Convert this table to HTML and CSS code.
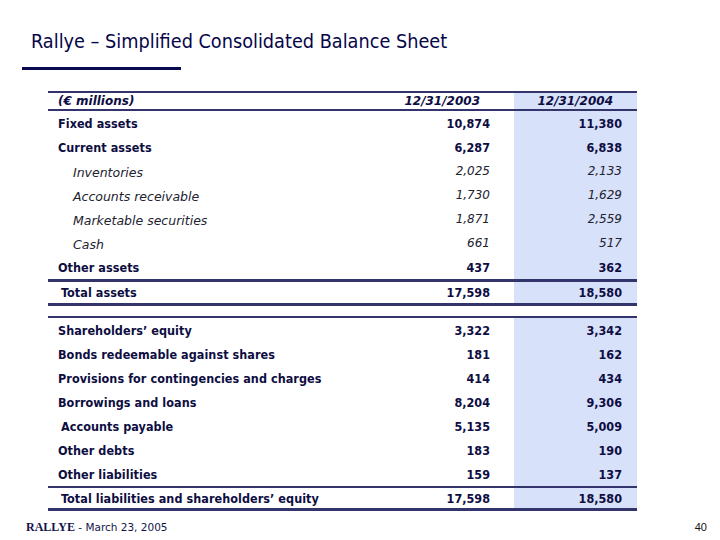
FILE: index.html
```html
<!DOCTYPE html>
<html lang="en">
<head>
<meta charset="utf-8">
<title>Rallye – Simplified Consolidated Balance Sheet</title>
<link rel="stylesheet" href="styles.css">
</head>
<body>
<div class="slide">
  <h1 class="title">Rallye – Simplified Consolidated Balance Sheet</h1>
  <div class="rule"></div>

  <div class="sheet">
    <div class="block">
      <div class="row head">
        <span class="label">(€ millions)</span>
        <span class="v1">12/31/2003</span>
        <span class="v2">12/31/2004</span>
      </div>
      <div class="row main"><span class="label">Fixed assets</span><span class="v1">10,874</span><span class="v2">11,380</span></div>
      <div class="row main"><span class="label">Current assets</span><span class="v1">6,287</span><span class="v2">6,838</span></div>
      <div class="row sub"><span class="label">Inventories</span><span class="v1">2,025</span><span class="v2">2,133</span></div>
      <div class="row sub"><span class="label">Accounts receivable</span><span class="v1">1,730</span><span class="v2">1,629</span></div>
      <div class="row sub"><span class="label">Marketable securities</span><span class="v1">1,871</span><span class="v2">2,559</span></div>
      <div class="row sub"><span class="label">Cash</span><span class="v1">661</span><span class="v2">517</span></div>
      <div class="row main"><span class="label">Other assets</span><span class="v1">437</span><span class="v2">362</span></div>
      <div class="row main total"><span class="label shifted">Total assets</span><span class="v1">17,598</span><span class="v2">18,580</span></div>
    </div>

    <div class="block block-liab">
      <div class="row main"><span class="label">Shareholders’ equity</span><span class="v1">3,322</span><span class="v2">3,342</span></div>
      <div class="row main"><span class="label">Bonds redeemable against shares</span><span class="v1">181</span><span class="v2">162</span></div>
      <div class="row main"><span class="label">Provisions for contingencies and charges</span><span class="v1">414</span><span class="v2">434</span></div>
      <div class="row main"><span class="label">Borrowings and loans</span><span class="v1">8,204</span><span class="v2">9,306</span></div>
      <div class="row main"><span class="label shifted">Accounts payable</span><span class="v1">5,135</span><span class="v2">5,009</span></div>
      <div class="row main"><span class="label">Other debts</span><span class="v1">183</span><span class="v2">190</span></div>
      <div class="row main"><span class="label">Other liabilities</span><span class="v1">159</span><span class="v2">137</span></div>
      <div class="row main total total-liab"><span class="label shifted">Total liabilities and shareholders’ equity</span><span class="v1">17,598</span><span class="v2">18,580</span></div>
    </div>
  </div>

  <footer class="footer">
    <span class="source"><b class="brand">RALLYE</b> - March 23, 2005</span>
    <span class="page">40</span>
  </footer>
</div>
</body>
</html>
```

FILE: styles.css
```css
html, body {
  margin: 0;
  padding: 0;
  background: #ffffff;
}

.slide {
  width: 720px;
  height: 540px;
  display: flex;
  flex-direction: column;
  font-family: "DejaVu Sans", Verdana, sans-serif;
  color: #0d0d42;
}

.title {
  margin: 31px 0 0 31px;
  font-family: "DejaVu Sans Condensed", "DejaVu Sans", sans-serif;
  font-stretch: condensed;
  font-size: 19.7px;
  line-height: 22px;
  font-weight: normal;
  color: #06064a;
}

.rule {
  margin: 14px 0 0 22px;
  width: 159px;
  height: 3px;
  background: #0a0a4e;
}

.sheet {
  margin: 21px 0 0 48px;
  width: 589px;
  display: flex;
  flex-direction: column;
  gap: 10px;
}

.block {
  border-top: 2px solid #34346c;
  border-bottom: 3px solid #34346c;
}

.row {
  display: grid;
  grid-template-columns: 342px 124px 123px;
  height: 24px;
  align-items: stretch;
}

.row > span {
  display: flex;
  align-items: center;
  white-space: nowrap;
}

.label {
  padding-left: 10px;
}

.label.shifted {
  padding-left: 13px;
}

.v1 {
  justify-content: flex-end;
  padding-right: 24px;
}

.v2 {
  justify-content: flex-end;
  padding-right: 15px;
  background: #d8e1fa;
}

.head {
  height: 16px;
  border-bottom: 2px solid #34346c;
  font-size: 12px;
  font-weight: bold;
  font-style: italic;
}

.head .v1 {
  padding-right: 34px;
}

.head .v2 {
  padding-right: 24px;
}

.main {
  font-family: "DejaVu Sans Condensed", "DejaVu Sans", sans-serif;
  font-stretch: condensed;
  font-size: 12.5px;
  font-weight: bold;
}

.main .label {
  letter-spacing: 0.05px;
}

.sub {
  font-size: 12px;
  font-style: italic;
  color: #222230;
}

.sub .label {
  font-size: 12.5px;
  padding-left: 25px;
  padding-top: 2px;
}

.total {
  height: 21px;
  border-top: 3px solid #34346c;
}

.total-liab {
  height: 20px;
  border-top: 2px solid #34346c;
}

.footer {
  margin-top: auto;
  display: flex;
  justify-content: space-between;
  align-items: center;
  padding: 0 13px 6px 26px;
  line-height: 14px;
}

.source {
  font-size: 10.5px;
  color: #14144a;
}

.brand {
  font-family: "Liberation Serif", "Times New Roman", serif;
  font-size: 12px;
}

.page {
  font-family: "Liberation Sans", Arial, sans-serif;
  font-size: 11px;
  color: #111111;
}
```
